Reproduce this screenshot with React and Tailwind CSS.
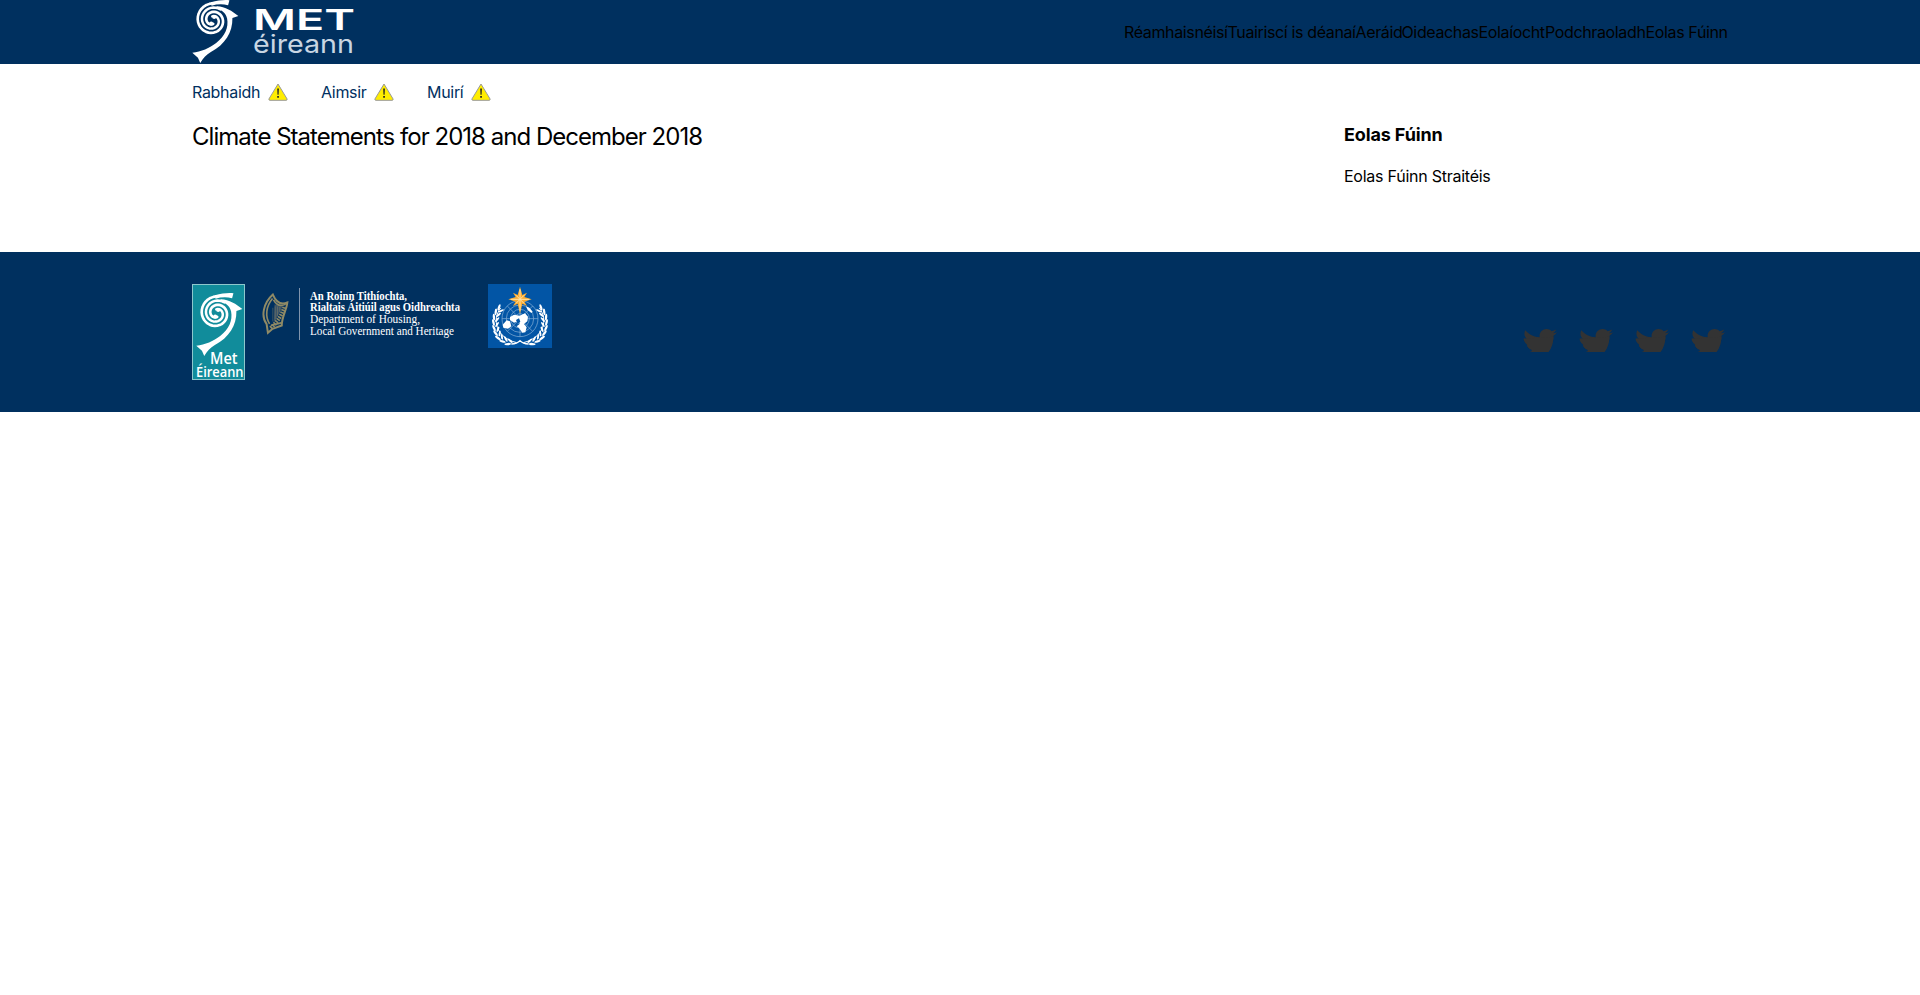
import React from "react";

const NAV = [
  ["Réamhaisnéisí", "w-[103.5px]"],
  ["Tuairiscí is déanaí", "w-[128px]"],
  ["Aeráid", "w-[46px]"],
  ["Oideachas", "w-[77px]"],
  ["Eolaíocht", "w-[66.5px]"],
  ["Podchraoladh", "w-[100.5px]"],
  ["Eolas Fúinn", "w-[82.5px]"],
];

const ALERTS = [
  ["Rabhaidh", "w-[129px]", "w-[72px]"],
  ["Aimsir", "w-[106px]", "w-[49px]"],
  ["Muirí", "w-[90px]", "w-10"],
];

// Points of one spiral arm, wound anticlockwise from the top, in turns.
function arm(start, end, radius) {
  const points = [];
  for (let t = start; t <= end + 0.001; t += 0.03) {
    const a = -Math.PI / 2 - t * 2 * Math.PI;
    const r = radius - 26 * t;
    points.push(`${(61 + r * Math.cos(a)).toFixed(1)} ${(61 + r * Math.sin(a)).toFixed(1)}`);
  }
  return "M" + points.join("L");
}

const OUTER_ARM = arm(0, 1.53, 51);
const INNER_ARM = arm(-0.1, 1.02, 38);

function Spiral({ className }) {
  return (
    <svg viewBox="0 0 140 190" className={className} fill="none" stroke="#fff" strokeLinecap="round" strokeLinejoin="round">
      <path d="M56 7 C78 1 98 -1 112 1 L108 16 C90 11 74 13 58 17Z" fill="#fff" stroke="none" />
      <path d={OUTER_ARM} strokeWidth="8" />
      <path d={INNER_ARM} strokeWidth="7.5" />
      <circle cx="57" cy="71" r="6" fill="#fff" stroke="none" />
      <circle cx="66" cy="51" r="6" fill="#fff" stroke="none" />
      <path d="M74 19 C100 20 120 34 139 48 L121 54 C122 98 98 134 56 157 C42 165 32 177 24 190 L17 174 L0 159 C27 157 52 145 72 130 C99 109 110 83 105 56 C101 40 90 30 70 26Z" fill="#fff" stroke="none" />
    </svg>
  );
}

function Warning() {
  return (
    <svg viewBox="0 0 20 18" className="h-[18px] w-5">
      <path d="M10 1 L19.1 16 Q19.4 17.3 18 17.3 H2 Q.6 17.3 .9 16Z" fill="#ffed00" stroke="#999" strokeLinejoin="round" />
      <path d="M9.2 5.5h1.7l-.3 6.3h-1.1zM9.2 13h1.7v1.8H9.2z" fill="#222" />
    </svg>
  );
}

function Harp() {
  return (
    <svg viewBox="0 0 82 126" className="h-[42px] w-[27px]" fill="none" stroke="#8f8a66">
      <path d="M38 34 L64 36 C54 58 46 76 36 88Z" fill="#3c5468" stroke="none" />
      <path d="M33 4 C4 30 -4 70 14 94 L18 120 L32 108 L60 98 C60 72 75 50 77 28 C58 36 44 30 33 4Z" strokeWidth="6" />
      <path d="M32 16 C12 40 9 70 23 93 M35 20 C45 38 59 40 72 33 M27 98 L58 90" strokeWidth="5" />
      <path d="M33 44 V86 M40 40 V80 M47 40 V70 M54 42 V58" strokeWidth="2" opacity=".65" />
      <path d="M68 42 C60 65 48 86 26 106" strokeWidth="12" strokeDasharray="5 3" />
    </svg>
  );
}

const LEAVES = [
  [27, 148, 20], [22, 134, 5], [20, 118, -5], [21, 102, -14], [26, 87, -24], [35, 74, -36], [34, 161, 38], [47, 170, 58], [62, 177, 75],
];

function Laurel() {
  return (
    <g>
      <path d="M38 72 C12 105 22 160 86 176" stroke="#fff" strokeWidth="3" fill="none" />
      {LEAVES.map(([x, y, r], i) => (
        <g key={i} transform={`translate(${x} ${y}) rotate(${-r})`} fill="#fff">
          <ellipse cx="-3" cy="-3" rx="3.5" ry="10" transform="rotate(-18)" />
          <ellipse cx="8" cy="-1" rx="3" ry="9" transform="rotate(28)" />
        </g>
      ))}
    </g>
  );
}

function Emblem() {
  return (
    <svg viewBox="0 0 192 192" className="h-16 w-16 bg-[#0255a5]">
      <g fill="none" stroke="#8fb5da" strokeWidth="2">
        <circle cx="96" cy="104" r="54" />
        <circle cx="96" cy="104" r="41" />
        <circle cx="96" cy="104" r="28" />
        <circle cx="96" cy="104" r="15" />
        <path d="M42 104H150M96 50V158M58 66L134 142M134 66L58 142" />
      </g>
      <path d="M66 99 L78 92 L95 95 L111 88 L120 98 L118 112 L108 120 L116 130 L112 145 L103 146 L93 132 L86 127 L96 119 L92 111 L78 116 L66 108Z" fill="#fff" />
      <path d="M44 122 L56 109 L66 112 L70 127 L60 134 L46 131Z M114 67 L124 71 L134 83 L130 87 L119 78Z" fill="#fff" />
      <path d="M84 108 L93 103 L97 113 L89 119Z" fill="#0255a5" />
      <Laurel />
      <g transform="translate(192 0) scale(-1 1)"><Laurel /></g>
      <path d="M70 180 C83 179 91 175 96 170 C101 175 109 179 122 180" fill="none" stroke="#fff" strokeWidth="4" />
      <path d="M96 8 L103 33 L117 26 L109 39 L131 46 L109 53 L117 66 L103 59 L96 90 L89 59 L75 66 L83 53 L61 46 L83 39 L75 26 L89 33Z" fill="#fbad32" />
      <path d="M96 16V80M68 46H124M84 34L108 58M108 34L84 58" stroke="#ffe3a8" strokeWidth="3" />
    </svg>
  );
}

function Bird() {
  return (
    <svg viewBox="0 48 512 357" preserveAspectRatio="none" className="h-[23px] w-[34px]" fill="#333">
      <path d="M459.37 151.716c.325 4.548.325 9.097.325 13.645 0 138.72-105.583 298.558-298.558 298.558-59.452 0-114.68-17.219-161.137-47.106 8.447.974 16.568 1.299 25.34 1.299 49.055 0 94.213-16.568 130.274-44.832-46.132-.975-84.792-31.188-98.112-72.772 6.498.974 12.995 1.624 19.818 1.624 9.421 0 18.843-1.3 27.614-3.573-48.081-9.747-84.143-51.98-84.143-102.985v-1.299c13.969 7.797 30.214 12.67 47.431 13.319-28.264-18.843-46.781-51.005-46.781-87.391 0-19.492 5.197-37.36 14.294-52.954 51.655 63.675 129.3 105.258 216.365 109.807-1.624-7.797-2.599-15.918-2.599-24.04 0-57.828 46.782-104.934 104.934-104.934 30.213 0 57.502 12.67 76.67 33.137 23.715-4.548 46.456-13.32 66.599-25.34-7.798 24.366-24.366 44.833-46.132 57.827 21.117-2.273 41.584-8.122 60.426-16.243-14.292 20.791-32.161 39.308-52.628 54.253z" />
      <path d="M10 195 Q5 240 60 290 L62 300 Q72 345 130 372 L134 405 H385 Q455 320 459 170 L300 180 L240 184Z" />
    </svg>
  );
}

export default function App() {
  return (
    <div className="min-h-[995px] bg-white font-['Inter','Liberation_Sans',sans-serif] text-base text-black">
      <header className="flex h-16 items-start justify-between bg-[#00305f] px-48">
        <div className="flex">
          <Spiral className="h-[63px] w-[47px]" />
          <svg viewBox="0 0 102 64" className="ml-[14px] h-16 w-[102px] overflow-visible">
            <text x="0" y="29.5" fontSize="29" fontWeight="600" fill="#fff" textLength="102" lengthAdjust="spacingAndGlyphs">MET</text>
            <text x="0" y="53" fontSize="25" fontWeight="400" fill="#c9d6e3" textLength="101" lengthAdjust="spacingAndGlyphs">éireann</text>
          </svg>
        </div>
        <nav className="flex h-16 items-center">
          {NAV.map(([label, width]) => (
            <a key={label} className={`${width} whitespace-nowrap tracking-[-0.36px]`}>{label}</a>
          ))}
        </nav>
      </header>

      <div className="flex h-14 items-center px-48 text-[#00305f]">
        {ALERTS.map(([label, width, text]) => (
          <div key={label} className={`${width} flex items-center gap-1`}>
            <span className={`${text} whitespace-nowrap tracking-[-0.3px]`}>{label}</span>
            <Warning />
          </div>
        ))}
      </div>

      <main className="flex h-[132px] px-48">
        <h1 className="w-[1152px] pt-[1px] text-2xl tracking-[-0.98px]">Climate Statements for 2018 and December 2018</h1>
        <aside>
          <h2 className="pt-px text-lg font-bold leading-7 tracking-[-0.13px]">Eolas Fúinn</h2>
          <p className="mt-[15px] tracking-[-0.25px]">Eolas Fúinn Straitéis</p>
        </aside>
      </main>

      <footer className="flex h-40 justify-between bg-[#00305f] px-48 py-8">
        <div className="flex items-start">
          <div className="flex h-24 w-[53px] flex-col items-center border border-[#8dc7cc] bg-[#118c9b] pt-2 font-['Open_Sans',sans-serif] text-white">
            <Spiral className="ml-[2px] h-[63px] w-[47px] shrink-0" />
            <svg viewBox="0 0 51 28" className="-mt-[5px] h-7 w-[51px] shrink-0 overflow-visible" fill="#fff" fontWeight="600">
              <text x="17" y="13" fontSize="16" textLength="27.5" lengthAdjust="spacingAndGlyphs">Met</text>
              <text x="3" y="25.5" fontSize="14.5" textLength="47.5" lengthAdjust="spacingAndGlyphs">Éireann</text>
            </svg>
          </div>
          <div className="ml-[17px] mt-[9px]"><Harp /></div>
          <div className="ml-[10px] mt-1 h-[52px] w-px bg-[#8094ad]" />
          <svg viewBox="0 0 152 52" className="ml-[9px] mt-1 h-[52px] w-[152px] overflow-visible font-['Liberation_Serif',serif]" fill="#fff" fontSize="11.5">
            <text x="1" y="11.5" fontWeight="700" textLength="97" lengthAdjust="spacingAndGlyphs">An Roinn Tithíochta,</text>
            <text x="1" y="23" fontWeight="700" textLength="150" lengthAdjust="spacingAndGlyphs">Rialtais Áitiúil agus Oidhreachta</text>
            <text x="1" y="35" textLength="110" lengthAdjust="spacingAndGlyphs">Department of Housing,</text>
            <text x="1" y="46.5" textLength="144" lengthAdjust="spacingAndGlyphs">Local Government and Heritage</text>
          </svg>
          <div className="ml-[27px]"><Emblem /></div>
        </div>
        <div className="mr-[3px] mt-[45px] flex gap-[22px]">
          <Bird /><Bird /><Bird /><Bird />
        </div>
      </footer>
    </div>
  );
}
